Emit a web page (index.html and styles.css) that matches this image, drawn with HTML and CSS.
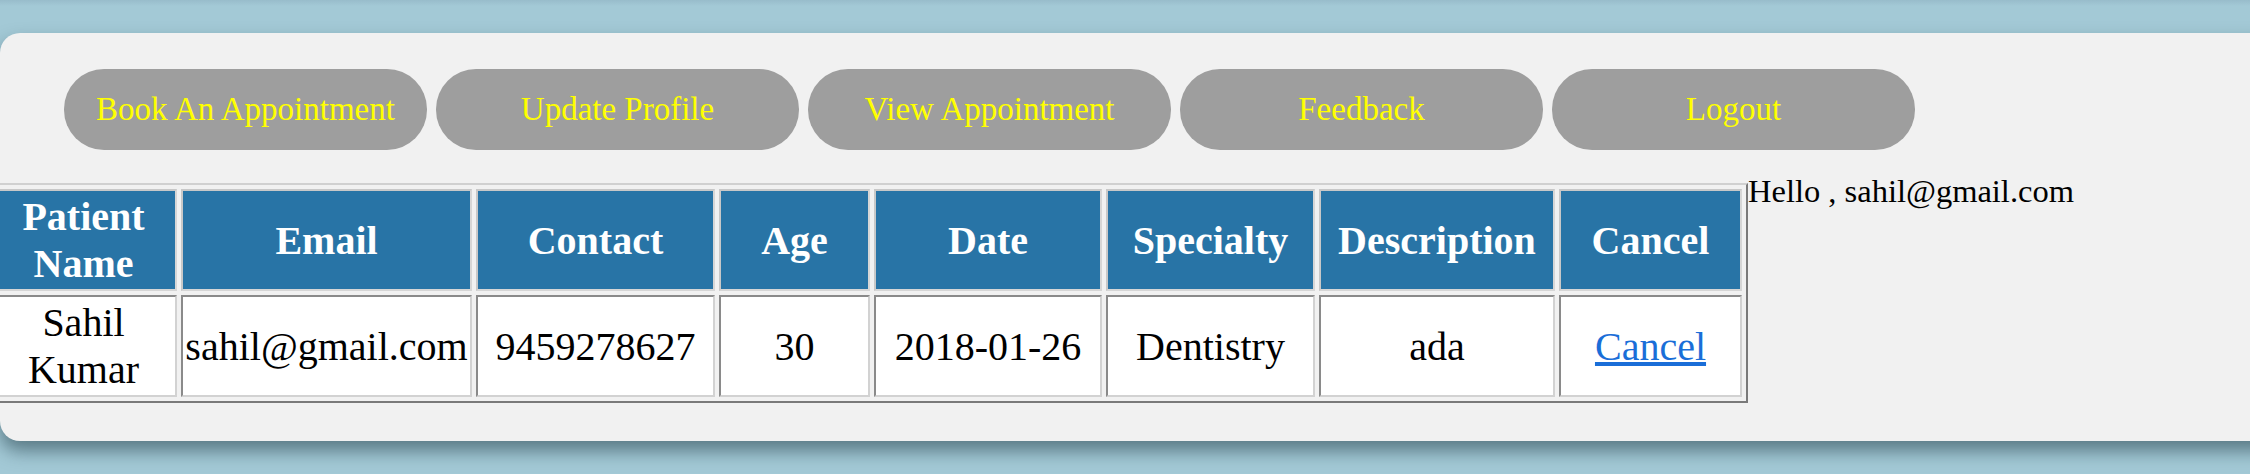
FILE: index.html
```html
<!DOCTYPE html>
<html>
<head>
<meta charset="utf-8">
<title>Patient Appointments</title>
<link rel="stylesheet" href="styles.css">
</head>
<body>
<div class="panel">
  <nav class="nav">
    <a class="btn">Book An Appointment</a>
    <a class="btn">Update Profile</a>
    <a class="btn">View Appointment</a>
    <a class="btn">Feedback</a>
    <a class="btn">Logout</a>
  </nav>
  <div class="content">
    <table class="grid">
      <thead>
        <tr>
          <th>Patient Name</th>
          <th>Email</th>
          <th>Contact</th>
          <th>Age</th>
          <th>Date</th>
          <th>Specialty</th>
          <th>Description</th>
          <th>Cancel</th>
        </tr>
      </thead>
      <tbody>
        <tr>
          <td>Sahil Kumar</td>
          <td>sahil@gmail.com</td>
          <td>9459278627</td>
          <td>30</td>
          <td>2018-01-26</td>
          <td>Dentistry</td>
          <td>ada</td>
          <td><a class="link" href="#">Cancel</a></td>
        </tr>
      </tbody>
    </table>
    <div class="hello">Hello , sahil@gmail.com</div>
  </div>
</div>
</body>
</html>
```

FILE: styles.css
```css
html {
  overflow: hidden;
}
body {
  margin: 0;
  background: linear-gradient(#98bccb 0px, #a3c9d6 6px, #a3c9d6 100%);
  font-family: "Liberation Serif", "Times New Roman", serif;
  height: 474px;
}
.panel {
  margin-top: 33px;
  margin-right: -40px;
  height: 408px;
  box-sizing: border-box;
  background: #f1f1f1;
  border-radius: 20px;
  box-shadow: 0 10px 18px rgba(50, 80, 90, 0.65);
  padding: 36px 0 0 64px;
}
.nav {
  display: flex;
  gap: 9px;
}
.btn {
  width: 363px;
  height: 81px;
  border-radius: 40px;
  background: #9e9e9e;
  color: #ffff00;
  font-size: 33px;
  display: flex;
  align-items: center;
  justify-content: center;
  text-decoration: none;
}
.content {
  display: flex;
  align-items: flex-start;
  margin-top: 23px;
  margin-left: -80px;
}
.grid {
  margin-top: 10px;
  width: 1764px;
  table-layout: fixed;
  border-collapse: separate;
  border-spacing: 4px;
  border: 2px solid;
  border-color: #d0d0d0 #7a7a7a #7a7a7a #d0d0d0;
  font-size: 40px;
}
.grid th,
.grid td {
  padding: 2px;
  border: 2px solid;
  border-color: #8a8a8a #d2d2d2 #d2d2d2 #8a8a8a;
  text-align: center;
  vertical-align: middle;
  line-height: normal;
}
.grid th {
  background: #2874a6;
  color: #ffffff;
  font-weight: bold;
  border-color: #c8c8c8 #d6d6d6 #d6d6d6 #c8c8c8;
}
.grid td {
  background: #ffffff;
  color: #000000;
}
.grid th:nth-child(1) { width: 179px; }
.grid th:nth-child(2) { width: 283px; }
.grid th:nth-child(3) { width: 231px; }
.grid th:nth-child(4) { width: 143px; }
.grid th:nth-child(5) { width: 220px; }
.grid th:nth-child(6) { width: 201px; }
.grid th:nth-child(7) { width: 228px; }
.grid th:nth-child(8) { width: 175px; }
.link {
  color: #1a6ed8;
  text-decoration: underline;
}
.hello {
  font-size: 32.5px;
  line-height: 37px;
  color: #000000;
  white-space: nowrap;
}
```
